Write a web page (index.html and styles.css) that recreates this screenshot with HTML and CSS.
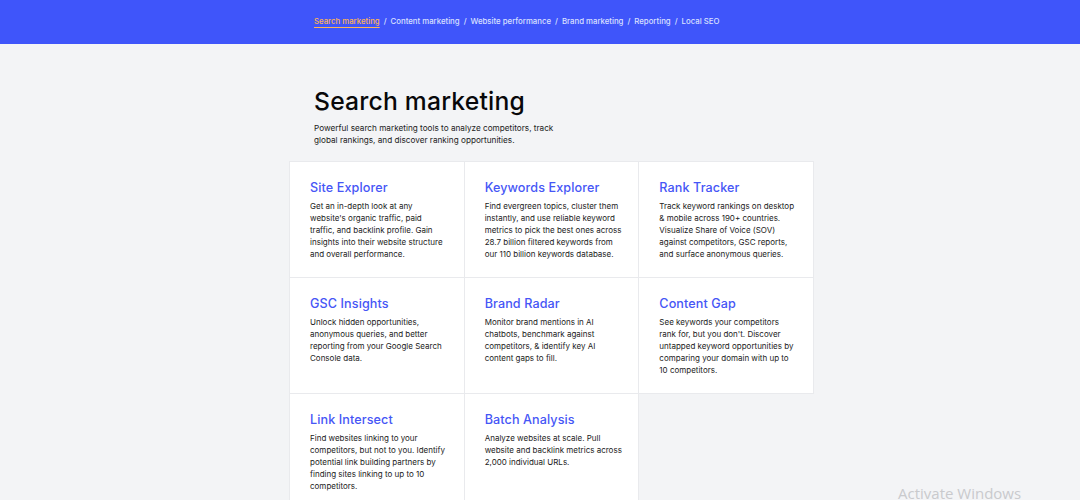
FILE: index.html
```html
<!DOCTYPE html>
<html lang="en">
<head>
    <meta charset="UTF-8">
    <meta name="viewport" content="width=device-width, initial-scale=1.0">
    <title>Search marketing</title>
    <link rel="stylesheet" href="styles.css">
</head>
<body>

    <!-- Top category bar -->
    <header class="topbar">
        <nav class="crumbs">
            <a href="#" class="active">Search marketing</a>
            <span class="sep">/</span>
            <a href="#">Content marketing</a>
            <span class="sep">/</span>
            <a href="#">Website performance</a>
            <span class="sep">/</span>
            <a href="#">Brand marketing</a>
            <span class="sep">/</span>
            <a href="#">Reporting</a>
            <span class="sep">/</span>
            <a href="#">Local SEO</a>
        </nav>
    </header>

    <main class="page">
        <section class="intro">
            <h1>Search marketing</h1>
            <p>Powerful search marketing tools to analyze competitors, track global rankings, and discover ranking opportunities.</p>
        </section>

        <!-- Tools grid -->
        <div class="tools">
            <div class="tool">
                <h3>Site Explorer</h3>
                <p>Get an in-depth look at any website's organic traffic, paid traffic, and backlink profile. Gain insights into their website structure and overall performance.</p>
            </div>
            <div class="tool">
                <h3>Keywords Explorer</h3>
                <p>Find evergreen topics, cluster them instantly, and use reliable keyword metrics to pick the best ones across 28.7 billion filtered keywords from our 110 billion keywords database.</p>
            </div>
            <div class="tool">
                <h3>Rank Tracker</h3>
                <p>Track keyword rankings on desktop &amp; mobile across 190+ countries. Visualize Share of Voice (SOV) against competitors, GSC reports, and surface anonymous queries.</p>
            </div>
            <div class="tool">
                <h3>GSC Insights</h3>
                <p>Unlock hidden opportunities, anonymous queries, and better reporting from your Google Search Console data.</p>
            </div>
            <div class="tool">
                <h3>Brand Radar</h3>
                <p>Monitor brand mentions in AI chatbots, benchmark against competitors, &amp; identify key AI content gaps to fill.</p>
            </div>
            <div class="tool">
                <h3>Content Gap</h3>
                <p>See keywords your competitors rank for, but you don't. Discover untapped keyword opportunities by comparing your domain with up to 10 competitors.</p>
            </div>
            <div class="tool">
                <h3>Link Intersect</h3>
                <p>Find websites linking to your competitors, but not to you. Identify potential link building partners by finding sites linking to up to 10 competitors.</p>
            </div>
            <div class="tool">
                <h3>Batch Analysis</h3>
                <p>Analyze websites at scale. Pull website and backlink metrics across 2,000 individual URLs.</p>
            </div>
        </div>
    </main>

    <div class="watermark">Activate Windows</div>

</body>
</html>
```

FILE: styles.css
```css
body {
    font-family: Inter, "Noto Sans", sans-serif;
    background-color: #f3f4f6;
    margin: 0;
    padding: 0;
    color: #1e1e24;
    height: 500px;
    overflow: hidden;
}

.topbar {
    background: #3f55fa;
    height: 44px;
    display: flex;
    align-items: center;
}

.crumbs {
    margin-left: calc(50% - 226px);
    font-size: 7.8px;
    font-weight: 500;
    color: #dbe0ff;
    display: flex;
    gap: 4px;
    margin-top: -3px;
}

.crumbs a {
    color: #dbe0ff;
    text-decoration: none;
}

.crumbs a.active {
    color: #ffb454;
    text-decoration: underline;
    text-underline-offset: 3px;
}

.page {
    width: 525px;
    margin-left: calc(50% - 251px);
}

.intro {
    padding: 42px 0 0 25px;
}

h1 {
    font-size: 24.7px;
    font-weight: 500;
    color: #08080a;
    margin: 0;
    letter-spacing: 0.2px;
    line-height: 30px;
}

.intro p {
    font-size: 8.2px;
    line-height: 12px;
    width: 250px;
    margin: 6px 0 15px;
    color: #222;
}

.tools {
    display: grid;
    grid-template-columns: repeat(3, 1fr);
    border-top: 1px solid #e9eaed;
    border-left: 1px solid #e9eaed;
}

.tool {
    background: #fff;
    padding: 18px 16px 9px 20px;
    height: 88px;
    border-right: 1px solid #e9eaed;
    border-bottom: 1px solid #e9eaed;
}

.tool h3 {
    font-size: 12.6px;
    font-weight: 500;
    color: #4656f6;
    margin: 0 0 4px;
    line-height: 16px;
    letter-spacing: 0.1px;
}

.tool p {
    font-size: 8px;
    line-height: 12px;
    margin: 0;
    color: #222;
}

.watermark {
    position: absolute;
    left: 898px;
    top: 483px;
    font-family: "Open Sans", sans-serif;
    font-size: 15px;
    color: #c9cacd;
}
```
